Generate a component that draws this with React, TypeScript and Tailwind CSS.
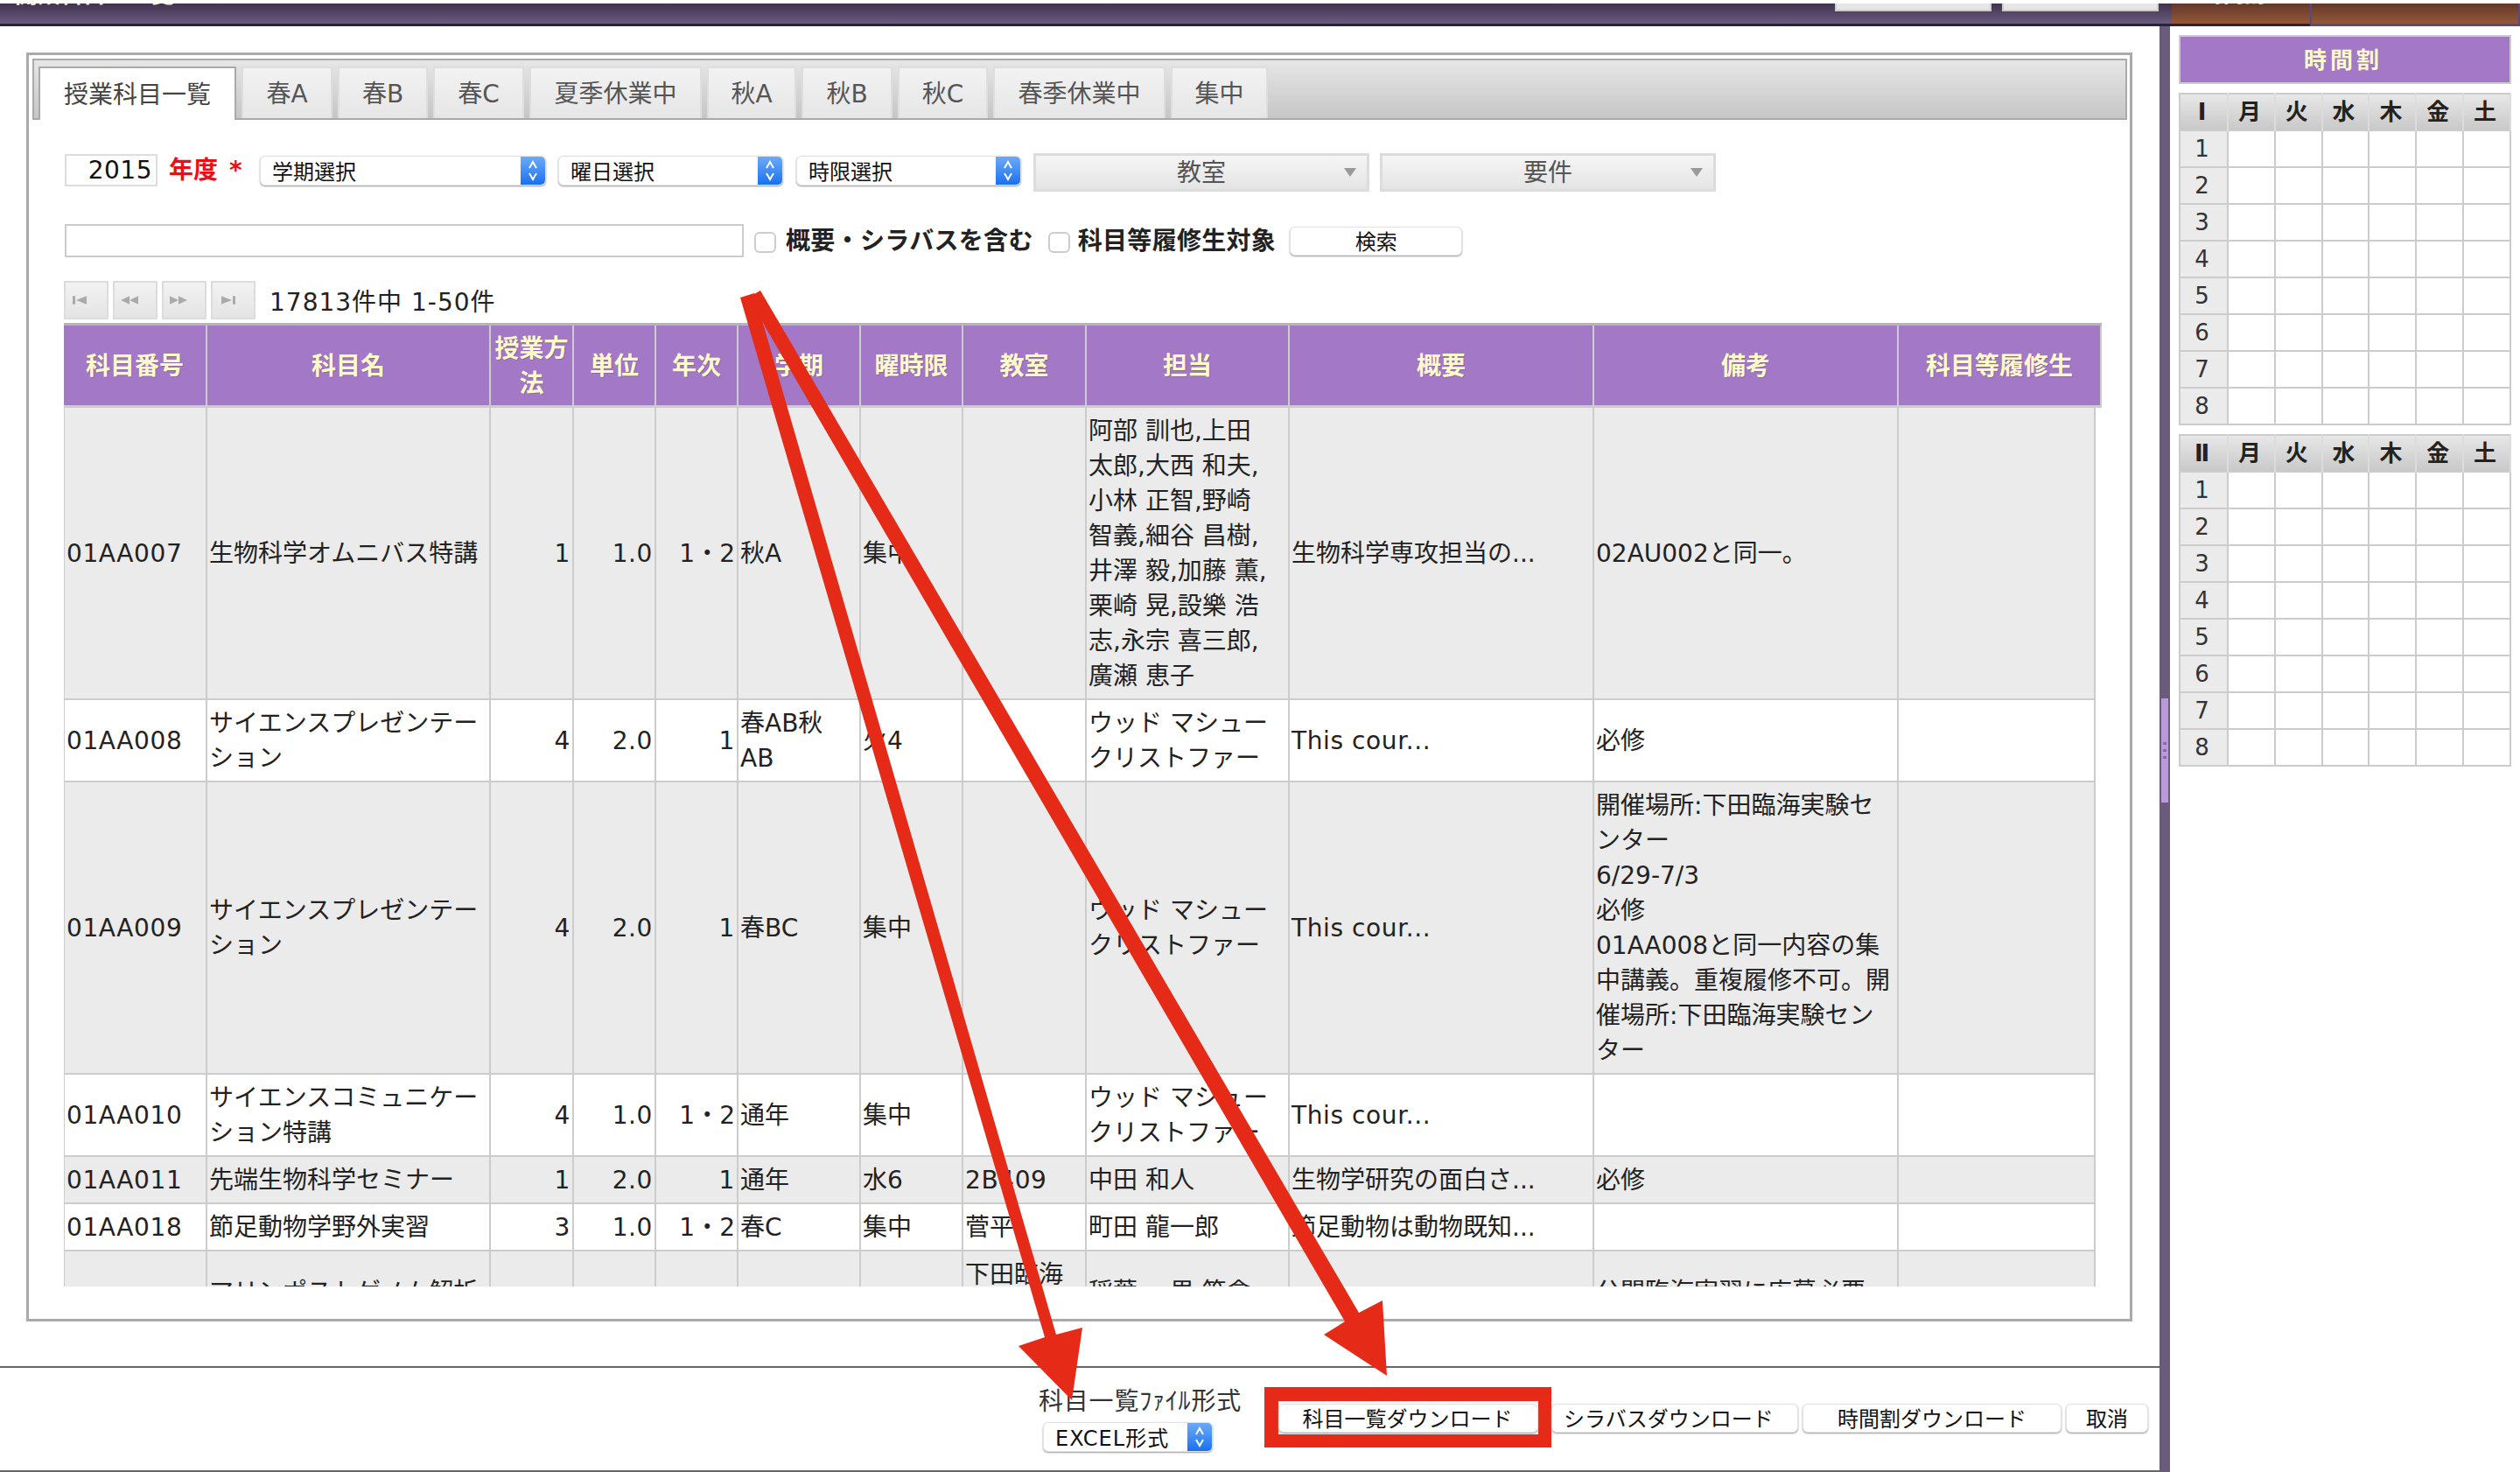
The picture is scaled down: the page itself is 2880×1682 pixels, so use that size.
const tabs = [
  { label: "春A", width: "w-[104px]" },
  { label: "春B", width: "w-[103px]" },
  { label: "春C", width: "w-[104px]" },
  { label: "夏季休業中", width: "w-[197px]" },
  { label: "秋A", width: "w-[102px]" },
  { label: "秋B", width: "w-[104px]" },
  { label: "秋C", width: "w-[103px]" },
  { label: "春季休業中", width: "w-[197px]" },
  { label: "集中", width: "w-[111px]" },
];

const headCols = ["w-[164px]", "w-[324px]", "w-[95px]", "w-[94px]", "w-[94px]", "w-[140px]", "w-[117px]", "w-[141px]", "w-[232px]", "w-[348px]", "w-[348px]", "w-[232px]"];
const bodyCols = ["w-[164px]", "w-[324px]", "w-[95px]", "w-[94px]", "w-[94px]", "w-[140px]", "w-[117px]", "w-[141px]", "w-[232px]", "w-[348px]", "w-[348px]", "w-[225px]"];
const heads = ["科目番号", "科目名", "授業方法", "単位", "年次", "学期", "曜時限", "教室", "担当", "概要", "備考", "科目等履修生"];

const wood = "ウッド マシュー\nクリストファー";
const rows = [
  ["01AA007", "生物科学オムニバス特講", "1", "1.0", "1・2", "秋A", "集中", "", "阿部 訓也,上田\n太郎,大西 和夫,\n小林 正智,野崎\n智義,細谷 昌樹,\n井澤 毅,加藤 薫,\n栗崎 晃,設樂 浩\n志,永宗 喜三郎,\n廣瀬 恵子", "生物科学専攻担当の...", "02AU002と同一。", ""],
  ["01AA008", "サイエンスプレゼンテー\nション", "4", "2.0", "1", "春AB秋\nAB", "火4", "", wood, "This cour...", "必修", ""],
  ["01AA009", "サイエンスプレゼンテー\nション", "4", "2.0", "1", "春BC", "集中", "", wood, "This cour...", "開催場所:下田臨海実験セ\nンター\n6/29-7/3\n必修\n01AA008と同一内容の集\n中講義。重複履修不可。開\n催場所:下田臨海実験セン\nター", ""],
  ["01AA010", "サイエンスコミュニケー\nション特講", "4", "1.0", "1・2", "通年", "集中", "", wood, "This cour...", "", ""],
  ["01AA011", "先端生物科学セミナー", "1", "2.0", "1", "通年", "水6", "2B409", "中田 和人", "生物学研究の面白さ...", "必修", ""],
  ["01AA018", "節足動物学野外実習", "3", "1.0", "1・2", "春C", "集中", "菅平", "町田 龍一郎", "節足動物は動物既知...", "", ""],
  ["01AA019", "マリンポストゲノム解析\n実習", "3", "1.0", "1・2", "夏季休業中", "集中", "下田臨海\n実験センタ\nー", "稲葉 一男,笹倉\n靖徳", "", "公開臨海実習に応募必要\nです。", ""],
];

function Select({ label, width, text }: { label: string; width: string; text: string }) {
  return (
    <div className={`flex h-[34px] ${width} overflow-hidden rounded-[6px] border border-[#e2e2e2] bg-white shadow-[0_1px_2px_#999]`}>
      <span className={`flex-1 pl-[13px] pt-[2px] leading-[32px] ${text} text-[#111]`}>{label}</span>
      <span className="flex w-[28px] items-center justify-center bg-gradient-to-b from-[#6aaaf8] to-[#1470f2]">
        <svg width="14" height="26" viewBox="0 0 14 26" fill="none" stroke="white" strokeWidth="2">
          <path d="M3 10 L7 3 L11 10" />
          <path d="M3 16 L7 23 L11 16" />
        </svg>
      </span>
    </div>
  );
}

function Drop({ label }: { label: string }) {
  return (
    <div className="relative flex h-[44px] w-[384px] items-center justify-center border-[3px] border-[#dcdcdc] bg-gradient-to-b from-[#f5f5f5] to-[#e4e4e4] pt-[2px] text-[28px] text-[#555]">
      {label}
      <svg className="absolute right-[12px] top-[14px]" width="14" height="10" viewBox="0 0 14 10">
        <path d="M0 0 H14 L7 10 Z" fill="#999" />
      </svg>
    </div>
  );
}

function PagerBtn({ d }: { d: string }) {
  return (
    <div className="flex h-[44px] w-[51px] items-center border-2 border-[#dcdcdc] bg-gradient-to-b from-[#f2f2f2] to-[#e4e4e4] pl-[5px]">
      <svg width="24" height="12" viewBox="0 0 24 18" preserveAspectRatio="none">
        <path d={d} fill="#aaa" />
      </svg>
    </div>
  );
}

function Btn({ label, width, extra = "" }: { label: string; width: string; extra?: string }) {
  return (
    <div className={`flex h-[33px] ${width} items-center justify-center rounded-[6px] border border-[#e2e2e2] bg-white pt-[3px] text-[24px] text-[#111] shadow-[0_1px_2px_#999] ${extra}`}>
      {label}
    </div>
  );
}

function Timetable({ title }: { title: string }) {
  const days = ["月", "火", "水", "木", "金", "土"];
  return (
    <table className="mt-[10px] w-[380px] table-fixed border-collapse border-2 border-[#ccc] text-[26px]">
      <thead>
        <tr className="h-[42px] bg-gradient-to-b from-[#e8e8e8] to-[#c8c8c8]">
          <th className="w-[55px] border-r-2 border-[#dcdcdc] pr-[4px] font-bold text-[#222]">{title}</th>
          {days.map((d) => (
            <th key={d} className="border-r-2 border-[#dcdcdc] pr-[4px] font-bold text-[#222]">{d}</th>
          ))}
        </tr>
      </thead>
      <tbody>
        {[1, 2, 3, 4, 5, 6, 7, 8].map((n) => (
          <tr key={n} className="h-[42px]">
            <td className="border-2 border-[#ccc] bg-[#ebebeb] p-0 pr-[4px] text-center text-[#333]">{n}</td>
            {days.map((d) => (
              <td key={d} className="border-2 border-[#ccc] p-0"></td>
            ))}
          </tr>
        ))}
      </tbody>
    </table>
  );
}

export default function App() {
  return (
    <div className="relative h-[1682px] w-[2880px] overflow-hidden bg-white pt-[4px] font-['DejaVu_Sans','Noto_Sans_CJK_JP',sans-serif] text-[28px] text-[#222]">
      {/* Top bar */}
      <div className="flex h-[26px]">
        <div className="flex flex-1 justify-between overflow-hidden border-b-[3px] border-[#2a2238] bg-gradient-to-b from-[#3f3350] to-[#6a5c7e] pl-[17px] pr-[15px]">
          <span className="-mt-[27px] h-[34px] text-[26px] font-bold leading-[34px] text-[#eeeacb]">開設科目　一覧</span>
          <div className="flex gap-[12px]">
            <div className="h-[9px] w-[179px] border-x-2 border-b-2 border-[#ccc] bg-[#e6e6e6]"></div>
            <div className="h-[9px] w-[179px] border-x-2 border-b-2 border-[#ccc] bg-[#e6e6e6]"></div>
          </div>
        </div>
        <div className="w-[158px] overflow-hidden border-b-[3px] border-[#2a2238] bg-gradient-to-b from-[#63392a] to-[#945838] pl-[35px]">
          <div className="-mt-[26px] text-[24px] font-bold leading-[32px] text-[#eeeacb]">時間割</div>
        </div>
        <div className="w-[2px] bg-[#5b4a7c]"></div>
        <div className="w-[236px] border-b-[3px] border-[#5b4a7c] bg-gradient-to-b from-[#63392a] to-[#945838]"></div>
        <div className="w-[2px] bg-[#5b4a7c]"></div>
      </div>

      <div className="flex h-[1652px]">
        {/* Main */}
        <div className="flex w-[2468px] flex-col">
          <div className="ml-[30px] mt-[30px] h-[1450px] w-[2407px] border-[3px] border-[#aaa] pl-[4px] pr-[3px] pt-[4px]">
            <div className="flex h-[70px] items-end gap-[6px] border-2 border-[#aaa] bg-gradient-to-b from-[#e6e6e6] to-[#c6c6c6] pl-[5px]">
              <div className="-mb-[2px] flex h-[61px] w-[226px] items-center justify-center border-2 border-b-0 border-[#aaa] bg-white pt-[2px] text-[#444]">授業科目一覧</div>
              {tabs.map((t) => (
                <div key={t.label} className={`flex h-[59px] ${t.width} items-center justify-center border-2 border-b-0 border-[#dedede] bg-gradient-to-b from-[#f2f2f2] to-[#e6e6e6] pt-[2px] text-[#555]`}>{t.label}</div>
              ))}
            </div>

            {/* Filters */}
            <div className="ml-[37px] mt-[38px] flex h-[44px] items-start">
              <div className="mt-[1px] h-[37px] w-[106px] border-2 border-[#ddd] pr-[4px] text-right text-[28px] leading-[33px] tracking-[0.5px] text-[#111]">2015</div>
              <span className="ml-[13px] font-bold leading-[40px] text-[#f00c16]">年度</span>
              <span className="ml-[13px] mr-[21px] w-[14px] font-bold leading-[40px] text-[#f00c16]">*</span>
              <div className="mt-[3px] flex gap-[14px]">
                <Select label="学期選択" width="w-[327px]" text="text-[24px]" />
                <Select label="曜日選択" width="w-[257px]" text="text-[24px]" />
                <Select label="時限選択" width="ml-[1px] w-[257px]" text="text-[24px]" />
              </div>
              <span className="w-[14px]"></span>
              <Drop label="教室" />
              <span className="w-[12px]"></span>
              <Drop label="要件" />
            </div>

            <div className="ml-[37px] mt-[37px] flex h-[38px] items-center">
              <div className="h-[38px] w-[776px] border-2 border-[#ccc]"></div>
              <div className="ml-[12px] mt-[4px] h-[24px] w-[25px] rounded-[6px] border-2 border-[#ccc] bg-white"></div>
              <span className="ml-[11px] pt-[2px] font-bold tracking-[0.3px] text-[#222]">概要・シラバスを含む</span>
              <div className="ml-[17px] mt-[4px] h-[24px] w-[25px] rounded-[6px] border-2 border-[#ccc] bg-white"></div>
              <span className="ml-[9px] pt-[2px] font-bold tracking-[0.3px] text-[#222]">科目等履修生対象</span>
              <div className="ml-[16px]">
                <Btn label="検索" width="w-[197px]" />
              </div>
            </div>

            {/* Pager */}
            <div className="ml-[36px] mt-[27px] flex h-[44px] items-center gap-[5px]">
              <PagerBtn d="M3 2 H6 V16 H3 Z M19 2 V16 L7 9 Z" />
              <PagerBtn d="M12 2 V16 L2 9 Z M22 2 V16 L12 9 Z" />
              <PagerBtn d="M2 2 L12 9 L2 16 Z M12 2 L22 9 L12 16 Z" />
              <PagerBtn d="M5 2 L17 9 L5 16 Z M18 2 H21 V16 H18 Z" />
              <span className="ml-[11px] mt-[5px] tracking-[1px] text-[#222]">17813件中 1-50件</span>
            </div>

            {/* Course table */}
            <div className="ml-[36px] mt-[4px] w-[2329px]">
              <table className="w-[2329px] table-fixed border-separate border-spacing-0 border-t-[3px] border-[#b5b5b5]">
                <colgroup>
                  {headCols.map((c, i) => (
                    <col key={i} className={c} />
                  ))}
                </colgroup>
                <thead>
                  <tr>
                    {heads.map((h) => (
                      <th key={h} className="h-[94px] border-b-[3px] border-r-2 border-[#ccc] bg-[#a278c7] p-0 pt-[2px] text-center align-middle font-bold leading-[40px] text-[#fffbc8] [text-shadow:1px_1px_0_#8d66b0]">
                        {h}
                      </th>
                    ))}
                  </tr>
                </thead>
              </table>
              <div className="h-[1004px] w-[2322px] overflow-hidden">
                <table className="w-[2322px] table-fixed border-separate border-spacing-0">
                  <colgroup>
                    {bodyCols.map((c, i) => (
                      <col key={i} className={c} />
                    ))}
                  </colgroup>
                  <tbody>
                    {rows.map((r, ri) => (
                      <tr key={ri} className={ri % 2 === 0 ? "bg-[#ebebeb]" : "bg-white"}>
                        {r.map((cell, ci) => (
                          <td
                            key={ci}
                            className={
                              "overflow-visible whitespace-pre border-b-2 border-r-2 border-[#ccc] pb-[5px] pt-[7px] align-middle leading-[40px] text-[#222] " +
                              (ci >= 2 && ci <= 4 ? "pr-[2px] text-right " : "pl-[2px] text-left ") +
                              (ci === 0 ? "border-l " : "") +
                              (/^[\x00-\x7f]+$/.test(cell) ? "tracking-[0.6px]" : "")
                            }
                          >
                            {cell}
                          </td>
                        ))}
                      </tr>
                    ))}
                  </tbody>
                </table>
              </div>
            </div>
          </div>

          {/* Footer */}
          <div className="mt-[51px] flex h-[121px] justify-end border-y-2 border-[#666] pr-[13px]">
            <div className="mt-[25px] flex flex-col">
              <span className="h-[28px] leading-[28px] tracking-[0.8px] text-[#333]">科目一覧ﾌｧｲﾙ形式</span>
              <div className="ml-[5px] mt-[9px]">
                <Select label="EXCEL形式" width="w-[194px]" text="text-[24px] tracking-[1px]" />
              </div>
            </div>
            <div className="ml-[26px] mt-[22px] flex h-[69px] w-[328px] items-start border-b-[15px] border-l-[16px] border-r-[15px] border-t-[16px] border-[#e52a18] bg-white pt-[3px]">
              <Btn label="科目一覧ダウンロード" width="w-[297px]" extra="pr-[2px]" />
            </div>
            <div className="mt-[41px] flex h-[33px] gap-[5px]">
              <Btn label="シラバスダウンロード" width="w-[282px]" extra="pr-[14px]" />
              <Btn label="時間割ダウンロード" width="w-[296px]" />
              <Btn label="取消" width="w-[94px]" />
            </div>
          </div>
        </div>

        {/* Resize handle */}
        <div className="w-[12px] bg-[#6b5b7b] pl-[2px] pt-[768px]">
          <div className="flex h-[119px] w-[8px] flex-col items-center justify-center gap-[5px] bg-[#b99bd9]">
            <div className="h-[3px] w-[4px] bg-[#8a6aa8]"></div>
            <div className="h-[3px] w-[4px] bg-[#8a6aa8]"></div>
            <div className="h-[3px] w-[4px] bg-[#8a6aa8]"></div>
          </div>
        </div>

        {/* Timetable */}
        <div className="w-[400px] pl-[10px] pt-[10px]">
          <div className="flex h-[56px] w-[380px] items-center justify-center border-2 border-[#ccc] bg-[#a278c7] pr-[4px] pt-[2px] text-[26px] font-bold tracking-[4px] text-[#fffbc8]">時間割</div>
          <Timetable title="Ⅰ" />
          <Timetable title="Ⅱ" />
        </div>
      </div>

      {/* Annotation arrows */}
      <svg className="pointer-events-none absolute left-0 top-0" width="2880" height="1682" viewBox="0 0 2880 1682">
        <polygon points="846,340 862,335 1207,1525 1237,1517 1225,1600 1164,1538 1194,1528" fill="#e52a18" />
        <polygon points="855,340 869,332 1553,1500 1580,1486 1585,1572 1513,1525 1537,1510" fill="#e52a18" />
      </svg>
    </div>
  );
}
